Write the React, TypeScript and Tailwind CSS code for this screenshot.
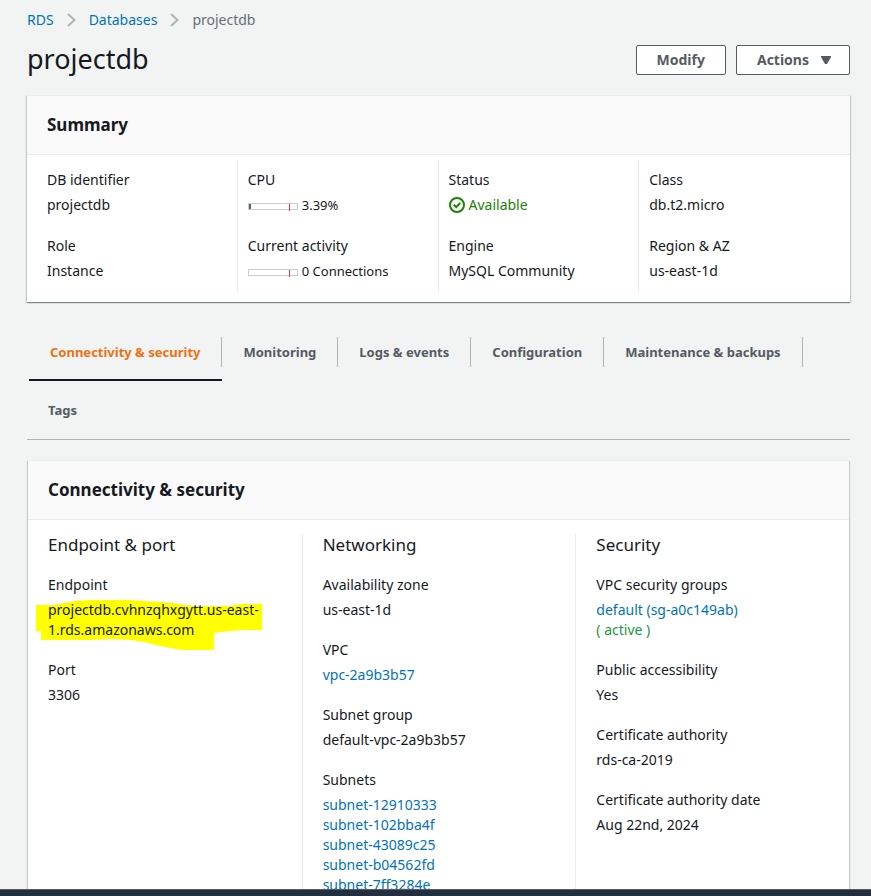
import type { ReactNode } from "react";

const tabs = [
  "Connectivity & security",
  "Monitoring",
  "Logs & events",
  "Configuration",
  "Maintenance & backups",
  "Tags",
];

const subnets = [
  "subnet-12910333",
  "subnet-102bba4f",
  "subnet-43089c25",
  "subnet-b04562fd",
  "subnet-7ff3284e",
];

function Separator() {
  return (
    <svg width="9" height="14" viewBox="0 0 9 14" fill="none" stroke="#aab7b8" strokeWidth="2" aria-hidden="true">
      <path d="M1 1l6.5 6L1 13" />
    </svg>
  );
}

function Link({ children }: { children: ReactNode }) {
  return (
    <a href="#" className="text-[#0073bb] hover:underline">
      {children}
    </a>
  );
}

function Card({ title, children }: { title: string; children: ReactNode }) {
  return (
    <section className="border-t border-[#eaeded] bg-white shadow-[0_1px_1px_0_rgba(0,28,36,0.3),1px_1px_1px_0_rgba(0,28,36,0.15),-1px_1px_1px_0_rgba(0,28,36,0.15)]">
      <header className="border-b border-[#eaeded] bg-[#fafafa] px-5 py-[18px]">
        <h2 className="text-[17px] font-bold leading-[22px]">{title}</h2>
      </header>
      {children}
    </section>
  );
}

function Field({ label, children }: { label: string; children: ReactNode }) {
  return (
    <div className="flex flex-col gap-[5px]">
      <dt>{label}</dt>
      <dd>{children}</dd>
    </div>
  );
}

function SummaryColumn({ children }: { children: ReactNode }) {
  return (
    <dl className="flex flex-col gap-[21px] border-r border-[#eaeded] px-[10px] pt-[10px] pb-[11px] last:border-r-0">
      {children}
    </dl>
  );
}

function DetailColumn({ title, children }: { title: string; children: ReactNode }) {
  return (
    <div className="border-l border-[#eaeded] px-5 first:border-l-0">
      <h3 className="text-[17px] leading-[22px]">{title}</h3>
      <dl className="flex flex-col gap-5 pt-[19px]">{children}</dl>
    </div>
  );
}

function Meter({ filled, text }: { filled: boolean; text: string }) {
  return (
    <span className="flex items-center gap-1">
      <svg width="50" height="9" viewBox="0 0 50 9" className="mt-[2px]" shapeRendering="crispEdges" aria-hidden="true">
        <path d="M0 1h50v7H0z" fill="#ccc" />
        <path d="M1 2h48v5H1z" fill="#fff" />
        {filled && <path d="M1 2h2v5H1z" fill="#406a87" />}
        <path d="M41 2h1v7h-1z" fill="#d13b40" />
      </svg>
      <span className="text-[13px]">{text}</span>
    </span>
  );
}

export default function App() {
  return (
    <div className="flex h-screen flex-col bg-[#f2f3f3] font-['Noto_Sans','Open_Sans',sans-serif] text-[14px] leading-5 text-[#16191f]">
      <main className="min-h-0 flex-1 overflow-hidden pl-[27px] pr-[21px] pt-[10px]">
        <nav aria-label="Breadcrumb" className="flex items-center gap-[13px]">
          <Link>RDS</Link>
          <Separator />
          <Link>Databases</Link>
          <Separator />
          <span className="text-[#687078]">projectdb</span>
        </nav>

        <div className="flex items-start justify-between pt-[15px] pb-5">
          <h1 className="text-[27px] leading-[28px]">projectdb</h1>
          <div className="flex gap-[10px] font-bold text-[#545b64]">
            <button type="button" className="h-[30px] rounded-[2px] border border-[#545b64] bg-white px-5">
              Modify
            </button>
            <button type="button" className="flex h-[30px] items-center gap-3 rounded-[2px] border border-[#545b64] bg-white pl-5 pr-[18px]">
              Actions
              <svg width="10" height="8" viewBox="0 0 10 8" fill="currentColor" aria-hidden="true">
                <path d="M0 0h10v1L6 8H4L0 1z" />
              </svg>
            </button>
          </div>
        </div>

        <Card title="Summary">
          <div className="grid grid-cols-4 px-[10px] pt-[5px] pb-[10px]">
            <SummaryColumn>
              <Field label="DB identifier">projectdb</Field>
              <Field label="Role">Instance</Field>
            </SummaryColumn>
            <SummaryColumn>
              <Field label="CPU">
                <Meter filled text="3.39%" />
              </Field>
              <Field label="Current activity">
                <Meter filled={false} text="0 Connections" />
              </Field>
            </SummaryColumn>
            <SummaryColumn>
              <Field label="Status">
                <span className="flex items-center gap-1 text-[#1d8102]">
                  <svg width="16" height="16" viewBox="0 0 16 16" fill="none" stroke="currentColor" strokeWidth="2" aria-hidden="true">
                    <circle cx="8" cy="8" r="7" />
                    <path d="M4.8 7.8l2.4 2.3 4-4.1" />
                  </svg>
                  Available
                </span>
              </Field>
              <Field label="Engine">MySQL Community</Field>
            </SummaryColumn>
            <SummaryColumn>
              <Field label="Class">db.t2.micro</Field>
              <Field label="Region & AZ">us-east-1d</Field>
            </SummaryColumn>
          </div>
        </Card>

        <div role="tablist" className="mt-[21px] mb-5 flex flex-wrap border-b border-[#aab7b8] text-[13px] font-bold text-[#545b64]">
          {tabs.map((tab, i) => (
            <button
              key={tab}
              type="button"
              role="tab"
              aria-selected={i === 0}
              className="group flex h-[58px] flex-col pt-[14px] first:ml-[2px] aria-selected:text-[#ec7211]"
            >
              <span className="flex h-[30px] items-center border-r border-[#aab7b8] px-[21px] group-last:border-r-0">
                {tab}
              </span>
              <span className="mt-3 h-[2px] w-full group-aria-selected:bg-[#16191f]" />
            </button>
          ))}
        </div>

        <div className="px-px">
          <Card title="Connectivity & security">
            <div className="grid grid-cols-3 pt-[14px] pb-5">
              <DetailColumn title="Endpoint & port">
                <Field label="Endpoint">
                  <span className="relative isolate block">
                    <svg
                      className="absolute -left-3 -top-[1px] -z-10"
                      width="226"
                      height="51"
                      viewBox="0 0 226 51"
                      fill="#ffff00"
                      aria-hidden="true"
                    >
                      <path d="M0 6h18l10-2 12-2 14-1h38l14 1 20 1 18 2 14 2h34l14-2h20v26h-18l-14 1-16 2v18h-14l-18-1-12-2-14-3-12-3-14-2-20-1-20 1H5V32H0z" />
                    </svg>
                    projectdb.cvhnzqhxgytt.us-east-
                    <br />
                    1.rds.amazonaws.com
                  </span>
                </Field>
                <Field label="Port">3306</Field>
              </DetailColumn>
              <DetailColumn title="Networking">
                <Field label="Availability zone">us-east-1d</Field>
                <Field label="VPC">
                  <Link>vpc-2a9b3b57</Link>
                </Field>
                <Field label="Subnet group">default-vpc-2a9b3b57</Field>
                <Field label="Subnets">
                  <ul>
                    {subnets.map((subnet) => (
                      <li key={subnet}>
                        <Link>{subnet}</Link>
                      </li>
                    ))}
                  </ul>
                </Field>
              </DetailColumn>
              <DetailColumn title="Security">
                <Field label="VPC security groups">
                  <Link>default (sg-a0c149ab)</Link>
                  <p className="text-[#1a9641]">( active )</p>
                </Field>
                <Field label="Public accessibility">Yes</Field>
                <Field label="Certificate authority">rds-ca-2019</Field>
                <Field label="Certificate authority date">Aug 22nd, 2024</Field>
              </DetailColumn>
            </div>
          </Card>
        </div>
      </main>
      <footer className="h-[7px] shrink-0 border-t border-[#545b64] bg-[#232f3e]" />
    </div>
  );
}
